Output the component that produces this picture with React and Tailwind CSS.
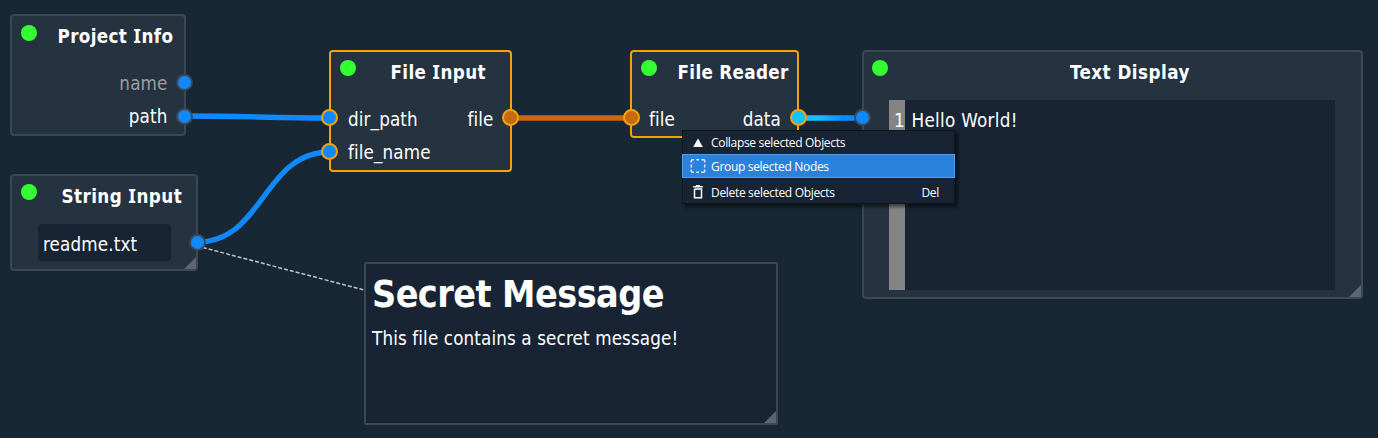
const REG = "font-['DejaVu_Sans_Condensed','DejaVu_Sans',sans-serif] [font-stretch:condensed]";
function Grip() {
  return <span className="absolute right-0 bottom-0 size-3 bg-[#5c6772] [clip-path:polygon(100%_0,100%_100%,0_100%)]" />;
}
function Port({ className }) {
  return <span className={"absolute size-[17px] rounded-full border-2 " + className} />;
}
// Titles use a capital I with serifs, taken from Noto Sans.
function Title({ text }) {
  const [before, after] = text.split("I");
  if (after === undefined) return text;
  return (
    <>
      {before}
      <span className="font-['Noto_Sans',sans-serif] tracking-[0.8px] [font-stretch:normal]">I</span>
      {after}
    </>
  );
}
function Node({ className, title, titleClass, dotClass = "mt-[8px] ml-[9px]", children }) {
  return (
    <section className={"absolute rounded-[4px] border-2 bg-[#25323f] " + className}>
      <header className="flex h-[42px] items-start">
        <span className={"size-4 shrink-0 rounded-full bg-[#33ff33] " + dotClass} />
        <h2 className={"whitespace-nowrap text-[18.67px] leading-[26px] font-bold " + titleClass}><Title text={title} /></h2>
      </header>
      {children}
    </section>
  );
}
export default function App() {
  return (
    <main className={"relative h-[438px] w-[1378px] overflow-hidden bg-[#172733] text-[18.67px] tracking-[0.13px] text-white " + REG}>
      <svg className="absolute inset-0" width="1378" height="438" fill="none">
        <defs>
          <linearGradient id="data" gradientUnits="userSpaceOnUse" x1="799" y1="0" x2="863" y2="0">
            <stop offset=".3" stopColor="#14c3ff" /><stop offset=".7" stopColor="#1089ff" />
          </linearGradient>
        </defs>
        <path d="M197 246 L364 290" stroke="#c0c4c6" strokeWidth="1.5" strokeDasharray="4 2" />
        <g strokeWidth="5.3">
          <path d="M185 116 C243 116 272 118 330 118" stroke="#1089ff" />
          <path d="M197 242 C264 242 263 152 330 152" stroke="#1089ff" />
          <path d="M511 118 H631" stroke="#c76a0d" />
          <path d="M799 118 H863" stroke="url(#data)" />
        </g>
      </svg>
      <Node className="top-[14px] left-[10px] h-[122px] w-[176px] border-[#3d4854]" dotClass="mt-[9px] ml-[9px]" title="Project Info" titleClass="pt-[7px] ml-[20.5px] tracking-[0.36px]">
        <div className="flex flex-col items-end pr-[16.5px] pt-[8.5px] leading-[33.5px]">
          <span className="text-[#9a9da1]">name</span><span>path</span>
        </div>
      </Node>
      <Node className="top-[174px] left-[10px] h-[97px] w-[188px] border-[#3d4854]" title="String Input" titleClass="pt-[7px] ml-[24.5px] tracking-[0.42px]">
        <div className="mt-[6px] ml-[26px] h-[37px] w-[133px] rounded-[4px] bg-[#182433] pl-[5px] leading-[42px]">readme.txt</div>
        <Grip />
      </Node>
      <Node className="top-[50px] left-[329px] h-[122px] w-[183px] border-[#f2a20c]" title="File Input" titleClass="pt-[7px] ml-[34.5px] tracking-[0.36px]">
        <div className="flex justify-between pr-[16.5px] pl-[17px] pt-[8.5px] leading-[33.5px]">
          <div className="flex flex-col"><span>dir_path</span><span>file_name</span></div>
          <span>file</span>
        </div>
      </Node>
      <Node className="top-[50px] left-[630px] h-[88px] w-[169px] border-[#f2a20c]" title="File Reader" titleClass="pt-[8px] ml-[20.5px] tracking-[0.33px]">
        <div className="flex justify-between pr-[16px] pl-[17px] pt-[8.5px] leading-[33.5px]"><span>file</span><span>data</span></div>
      </Node>
      <Node className="top-[50px] left-[862px] h-[249px] w-[501px] border-[#3d4854]" dotClass="mt-[8px] ml-[8px]" title="Text Display" titleClass="pt-[8px] ml-[182px] tracking-[0.48px]">
        <div className="mt-[6px] ml-[25px] flex h-[190px] w-[446px] bg-[#182433] leading-[42px]">
          <span className="w-4 bg-[#848484] pl-[5px]">1</span><span className="pl-[6.5px] tracking-[0.3px]">Hello World!</span>
        </div>
        <Grip />
      </Node>
      <section className="absolute top-[262px] left-[364px] h-[163px] w-[414px] rounded-[2px] border-2 border-[#3d4854] bg-[#182433] pl-[6px]">
        <h1 className="pt-[6px] text-[37.33px] leading-[48px] font-bold tracking-[-0.55px] whitespace-nowrap">Secret Message</h1>
        <p className="pt-[5px] leading-[32px] whitespace-nowrap">This file contains a secret message!</p>
        <Grip />
      </section>
      <Port className="top-[74px] left-[176px] border-[#3d4854] bg-[#1089ff]" />
      <Port className="top-[107.5px] left-[176px] border-[#3d4854] bg-[#1089ff]" />
      <Port className="top-[233.5px] left-[188.5px] border-[#3d4854] bg-[#1089ff]" />
      <Port className="top-[109.4px] left-[321.4px] border-[#f2a20c] bg-[#1089ff]" />
      <Port className="top-[143px] left-[321.4px] border-[#f2a20c] bg-[#1089ff]" />
      <Port className="top-[109.4px] left-[502px] border-[#f2a20c] bg-[#c76a0d]" />
      <Port className="top-[109.4px] left-[622.5px] border-[#f2a20c] bg-[#c76a0d]" />
      <Port className="top-[109.4px] left-[790px] border-[#f2a20c] bg-[#14c3ff]" />
      <Port className="top-[109.4px] left-[854px] border-[#3d4854] bg-[#1089ff]" />
      <nav className="absolute top-[130px] left-[682px] flex h-[74px] w-[273px] flex-col border border-[#0d161f] bg-[#182433] font-['Open_Sans',sans-serif] text-[12px] leading-[24px] tracking-[-0.32px] shadow-[3px_3px_3px_rgba(0,0,0,0.5)] [font-stretch:normal]">
        <div className="flex h-[23px] items-center pl-[7px]">
          <svg className="mr-[5px]" width="16" height="16"><path d="M3.2 12 L8 3.5 L12.8 12Z" fill="white" /></svg>
          <span>Collapse selected Objects</span>
        </div>
        <div className="-mx-px flex h-6 items-center border border-[#4e9eed] bg-[#2b82dc] pl-[7px]">
          <svg className="mr-[5px]" width="16" height="16" fill="none" stroke="#d5e6f8" strokeWidth="1.6">
            <path d="M1.3 4.5V2.8Q1.3 1.8 2.3 1.8H4M6.2 1.8H9M11.2 1.8H13.7Q14.7 1.8 14.7 2.8V4.5M14.7 6.6V9.4M14.7 11.5V13.2Q14.7 14.2 13.7 14.2H11.2M9 14.2H6.2M4 14.2H2.3Q1.3 14.2 1.3 13.2V11.5M1.3 9.4V6.6" />
          </svg>
          <span className="pt-[2px]">Group selected Nodes</span>
        </div>
        <div className="flex h-[26px] items-center pt-[3px] pr-[15px] pl-[7px]">
          <svg className="mr-[5px] -mt-px" width="16" height="16" fill="none" stroke="white" strokeWidth="1.5"><path d="M3.2 2.8H12.8M6 1.8H10M4.5 5V13.8H11.5V5H4.5" /></svg>
          <span>Delete selected Objects</span><span className="ml-auto">Del</span>
        </div>
      </nav>
    </main>
  );
}
